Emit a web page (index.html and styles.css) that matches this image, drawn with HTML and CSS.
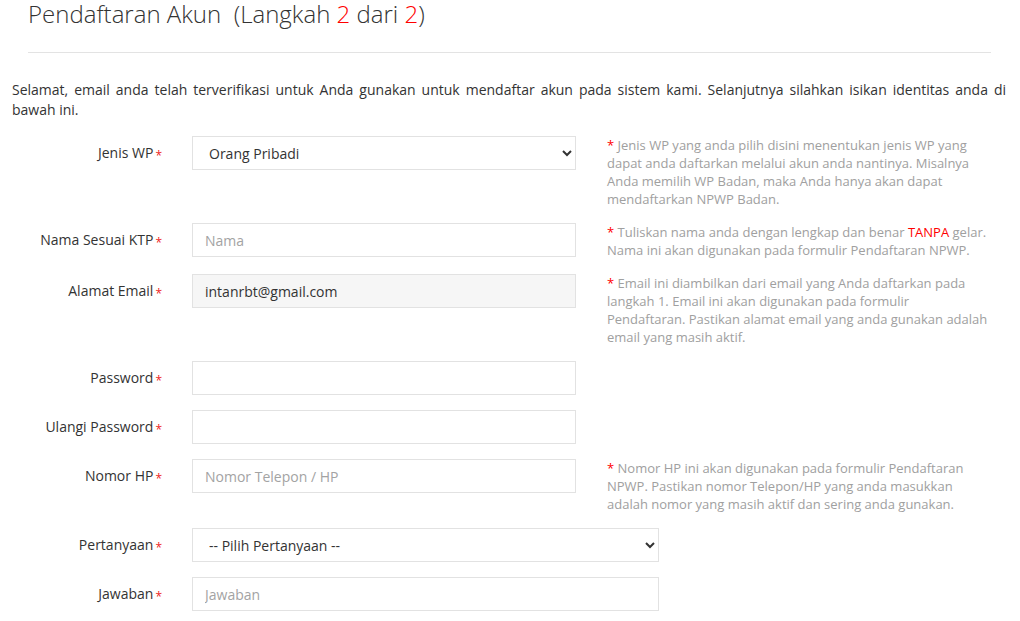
FILE: index.html
```html
<!DOCTYPE html>
<html lang="id">
<head>
<meta charset="utf-8">
<title>Pendaftaran Akun</title>
<link rel="stylesheet" href="styles.css">
</head>
<body>
<div class="page-header">
  <h1>Pendaftaran Akun &nbsp;(Langkah <span class="red">2</span> dari <span class="red">2</span>)</h1>
</div>
<p class="intro">Selamat, email anda telah terverifikasi untuk Anda gunakan untuk mendaftar akun pada sistem kami. Selanjutnya silahkan isikan identitas anda di bawah ini.</p>
<form class="form">
  <div class="row">
    <label class="lbl">Jenis WP<span class="req">*</span></label>
    <div class="field"><select class="ctrl sel"><option>Orang Pribadi</option><option>Badan</option></select></div>
    <div class="help"><span class="star">*</span> Jenis WP yang anda pilih disini menentukan jenis WP yang dapat anda daftarkan melalui akun anda nantinya. Misalnya Anda memilih WP Badan, maka Anda hanya akan dapat mendaftarkan NPWP Badan.</div>
  </div>
  <div class="row">
    <label class="lbl">Nama Sesuai KTP<span class="req">*</span></label>
    <div class="field"><input class="ctrl" type="text" placeholder="Nama"></div>
    <div class="help"><span class="star">*</span> Tuliskan nama anda dengan lengkap dan benar <span class="red">TANPA</span> gelar. Nama ini akan digunakan pada formulir Pendaftaran NPWP.</div>
  </div>
  <div class="row">
    <label class="lbl">Alamat Email<span class="req">*</span></label>
    <div class="field"><input class="ctrl ro" type="text" value="intanrbt@gmail.com" readonly></div>
    <div class="help"><span class="star">*</span> Email ini diambilkan dari email yang Anda daftarkan pada langkah 1. Email ini akan digunakan pada formulir Pendaftaran. Pastikan alamat email yang anda gunakan adalah email yang masih aktif.</div>
  </div>
  <div class="row">
    <label class="lbl">Password<span class="req">*</span></label>
    <div class="field"><input class="ctrl" type="password"></div>
  </div>
  <div class="row">
    <label class="lbl">Ulangi Password<span class="req">*</span></label>
    <div class="field"><input class="ctrl" type="password"></div>
  </div>
  <div class="row">
    <label class="lbl">Nomor HP<span class="req">*</span></label>
    <div class="field"><input class="ctrl" type="text" placeholder="Nomor Telepon / HP"></div>
    <div class="help"><span class="star">*</span> Nomor HP ini akan digunakan pada formulir Pendaftaran NPWP. Pastikan nomor Telepon/HP yang anda masukkan adalah nomor yang masih aktif dan sering anda gunakan.</div>
  </div>
  <div class="row">
    <label class="lbl">Pertanyaan<span class="req">*</span></label>
    <div class="field wide"><select class="ctrl sel"><option>-- Pilih Pertanyaan --</option></select></div>
  </div>
  <div class="row">
    <label class="lbl">Jawaban<span class="req">*</span></label>
    <div class="field wide"><input class="ctrl" type="text" placeholder="Jawaban"></div>
  </div>
</form>
</body>
</html>
```
FILE: styles.css
```css
* { box-sizing: border-box; }
html, body {
  margin: 0;
  background: #fff;
  font-family: "Open Sans", "Liberation Sans", sans-serif;
  font-size: 14px;
  line-height: 20px;
  color: #333;
}
.page-header {
  margin: 0 29px 0 28px;
  height: 53px;
  border-bottom: 1px solid #e3e3e3;
}
.page-header h1 {
  margin: 0;
  font-size: 24px;
  font-weight: 300;
  line-height: 28px;
  color: #333;
}
.red { color: #f00; }
.intro {
  margin: 27px 14px 16px 12px;
  text-align: justify;
}
.form { margin: 0 0 0 11px; }
.row {
  display: flex;
  align-items: flex-start;
  margin-bottom: 15px;
}
.lbl {
  width: 166px;
  flex: none;
  padding: 7px 15px 0 0;
  text-align: right;
  color: #333;
}
.req {
  color: #e22;
  font-size: 12px;
  margin-left: 2px;
  vertical-align: -2px;
}
.field {
  width: 414px;
  flex: none;
  padding: 0 15px;
}
.field.wide { width: 497px; }
.ctrl {
  display: block;
  width: 100%;
  height: 34px;
  padding: 6px 12px;
  border: 1px solid #e2e2e2;
  border-radius: 0;
  background: #fff;
  font-family: inherit;
  font-size: 14px;
  line-height: 20px;
  color: #333;
  outline: none;
}
.sel { padding-left: 12px; padding-right: 6px; }
.ctrl::placeholder { color: #a3a3a3; }
.ctrl.ro { background: #f6f6f6; }
.help {
  flex: 1;
  padding: 0 30px 0 16px;
  font-size: 13px;
  line-height: 18px;
  color: #a0a0a0;
}
.star { color: #f00; }
```
